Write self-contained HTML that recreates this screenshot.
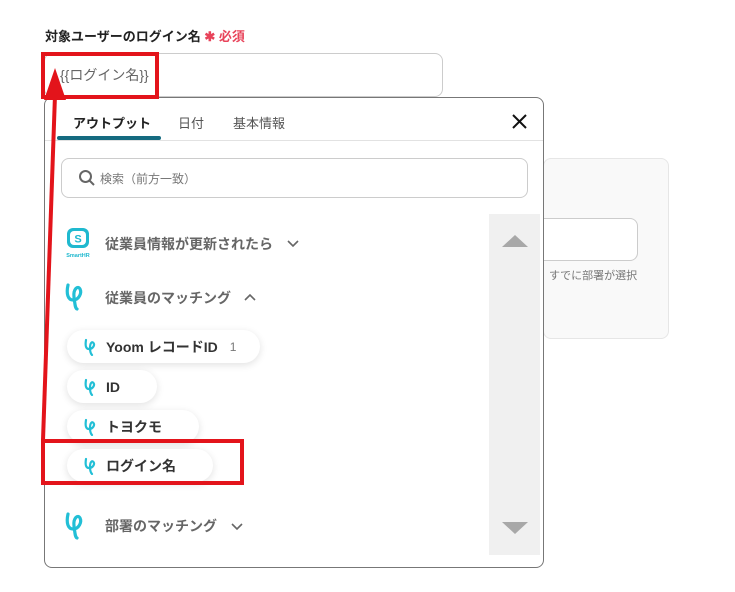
<!DOCTYPE html>
<html><head><meta charset="utf-8"><style>
*{box-sizing:border-box;margin:0;padding:0}
body{width:735px;height:592px;background:#fff;font-family:"Liberation Sans","Noto Sans CJK JP",sans-serif;position:relative;overflow:hidden;color:#333}
.a{position:absolute}
.pill{position:absolute;left:67px;height:33px;border-radius:17px;background:#fff;box-shadow:0 2px 8px rgba(0,0,0,.12);font-weight:bold;font-size:14px;color:#333;display:flex;align-items:center;padding-left:39px}
.pill svg{position:absolute;left:16px;top:8px}
.grp{position:absolute;left:105px;font-size:14px;font-weight:bold;color:#666}
</style></head><body>
<div class="a" style="left:45px;top:26px;font-size:13px;font-weight:bold;color:#222">対象ユーザーのログイン名<span style="color:#e8435a;font-size:13px"> ✱ 必須</span></div>
<div class="a" style="left:44px;top:53px;width:399px;height:44px;border:1px solid #ccc;border-radius:8px"></div>
<div class="a" style="left:60px;top:65px;font-size:14px;color:#666">{{ログイン名}}</div>

<div class="a" style="left:543px;top:158px;width:126px;height:181px;background:#f9f9f9;border:1px solid #e6e6e6;border-radius:8px"></div>
<div class="a" style="left:530px;top:218px;width:108px;height:43px;background:#fff;border:1px solid #ccc;border-radius:8px"></div>
<div class="a" style="left:549px;top:267px;font-size:11px;color:#777">すでに部署が選択</div>

<div class="a" style="left:44px;top:97px;width:500px;height:471px;background:#fff;border:1px solid #777;border-radius:8px"></div>
<div class="a" style="left:73px;top:113px;font-size:13px;font-weight:bold;color:#222">アウトプット</div>
<div class="a" style="left:178px;top:113px;font-size:13px;color:#555">日付</div>
<div class="a" style="left:233px;top:113px;font-size:13px;color:#555">基本情報</div>
<div class="a" style="left:57px;top:136px;width:104px;height:4px;background:#156b80;border-radius:2px"></div>
<div class="a" style="left:45px;top:140px;width:498px;height:1px;background:#e2e2e2"></div>
<svg class="a" style="left:511px;top:113px" width="17" height="17"><path d="M2 2L15 15M15 2L2 15" stroke="#111" stroke-width="2"/></svg>
<div class="a" style="left:61px;top:158px;width:467px;height:40px;border:1px solid #ccc;border-radius:8px"></div>
<svg class="a" style="left:78px;top:169px" width="18" height="18"><circle cx="7.5" cy="7.5" r="5.5" stroke="#666" stroke-width="2" fill="none"/><path d="M11.5 11.5L16 16" stroke="#666" stroke-width="2"/></svg>
<div class="a" style="left:100px;top:170px;font-size:12px;color:#777">検索（前方一致）</div>

<div class="a" style="left:489px;top:214px;width:51px;height:341px;background:#f0f0f0"></div>
<svg class="a" style="left:502px;top:234px" width="26" height="14"><path d="M0 13L13 1L26 13Z" fill="#a8a8a8"/></svg>
<svg class="a" style="left:502px;top:521px" width="26" height="14"><path d="M0 1L13 13L26 1Z" fill="#a8a8a8"/></svg>

<svg class="a" style="left:64px;top:228px" width="28" height="30"><rect x="3" y="0" width="22" height="20" rx="6" fill="#1fb9cf"/><rect x="6" y="3" width="16" height="14" rx="4" fill="#fff"/><text x="14" y="14.5" font-size="11" font-weight="bold" fill="#1fb9cf" text-anchor="middle" font-family="Liberation Sans">S</text><text x="14" y="29" font-size="5.5" font-weight="bold" fill="#1fb9cf" text-anchor="middle" font-family="Liberation Sans">SmartHR</text></svg>
<div class="grp" style="top:234px">従業員情報が更新されたら</div>
<svg class="a" style="left:287px;top:240px" width="12" height="8"><path d="M1 1L6 6L11 1" stroke="#666" stroke-width="1.6" fill="none"/></svg>

<svg class="a" style="left:62px;top:281px" width="26" height="32"><path d="M6 4C4 13 6 19 11 19C17 19 20 12 18 8C16 4 11 8 12 16C13 23 13 27 15 28" stroke="#22bfd6" stroke-width="3.2" fill="none" stroke-linecap="round"/></svg>
<div class="grp" style="top:288px">従業員のマッチング</div>
<svg class="a" style="left:244px;top:293px" width="12" height="8"><path d="M1 7L6 2L11 7" stroke="#666" stroke-width="1.6" fill="none"/></svg>

<div class="pill" style="top:330px;width:193px"><svg width="14" height="18"><path d="M3 2C2 8 3 11 6 11C10 11 12 7 10.5 5C9 3 7 5 7 10C7 14 8 16 9 17" stroke="#22bfd6" stroke-width="2.2" fill="none" stroke-linecap="round"/></svg>Yoom レコードID<span style="font-weight:normal;color:#777;margin-left:12px;font-size:12px">1</span></div>
<div class="pill" style="top:370px;width:90px"><svg width="14" height="18"><path d="M3 2C2 8 3 11 6 11C10 11 12 7 10.5 5C9 3 7 5 7 10C7 14 8 16 9 17" stroke="#22bfd6" stroke-width="2.2" fill="none" stroke-linecap="round"/></svg>ID</div>
<div class="pill" style="top:410px;width:132px"><svg width="14" height="18"><path d="M3 2C2 8 3 11 6 11C10 11 12 7 10.5 5C9 3 7 5 7 10C7 14 8 16 9 17" stroke="#22bfd6" stroke-width="2.2" fill="none" stroke-linecap="round"/></svg>トヨクモ</div>
<div class="pill" style="top:449px;width:146px"><svg width="14" height="18"><path d="M3 2C2 8 3 11 6 11C10 11 12 7 10.5 5C9 3 7 5 7 10C7 14 8 16 9 17" stroke="#22bfd6" stroke-width="2.2" fill="none" stroke-linecap="round"/></svg>ログイン名</div>

<svg class="a" style="left:62px;top:510px" width="26" height="32"><path d="M6 4C4 13 6 19 11 19C17 19 20 12 18 8C16 4 11 8 12 16C13 23 13 27 15 28" stroke="#22bfd6" stroke-width="3.2" fill="none" stroke-linecap="round"/></svg>
<div class="grp" style="top:516px">部署のマッチング</div>
<svg class="a" style="left:231px;top:523px" width="12" height="8"><path d="M1 1L6 6L11 1" stroke="#666" stroke-width="1.6" fill="none"/></svg>

<div class="a" style="left:41px;top:52px;width:118px;height:47px;border:4px solid #e3141b"></div>
<div class="a" style="left:41px;top:439px;width:203px;height:46px;border:4px solid #e3141b"></div>
<svg class="a" style="left:0;top:0" width="735" height="592"><path d="M43 440L55 95" stroke="#e3141b" stroke-width="4"/><path d="M44 100L55 68L66 100Z" fill="#e3141b"/></svg>
</body></html>
